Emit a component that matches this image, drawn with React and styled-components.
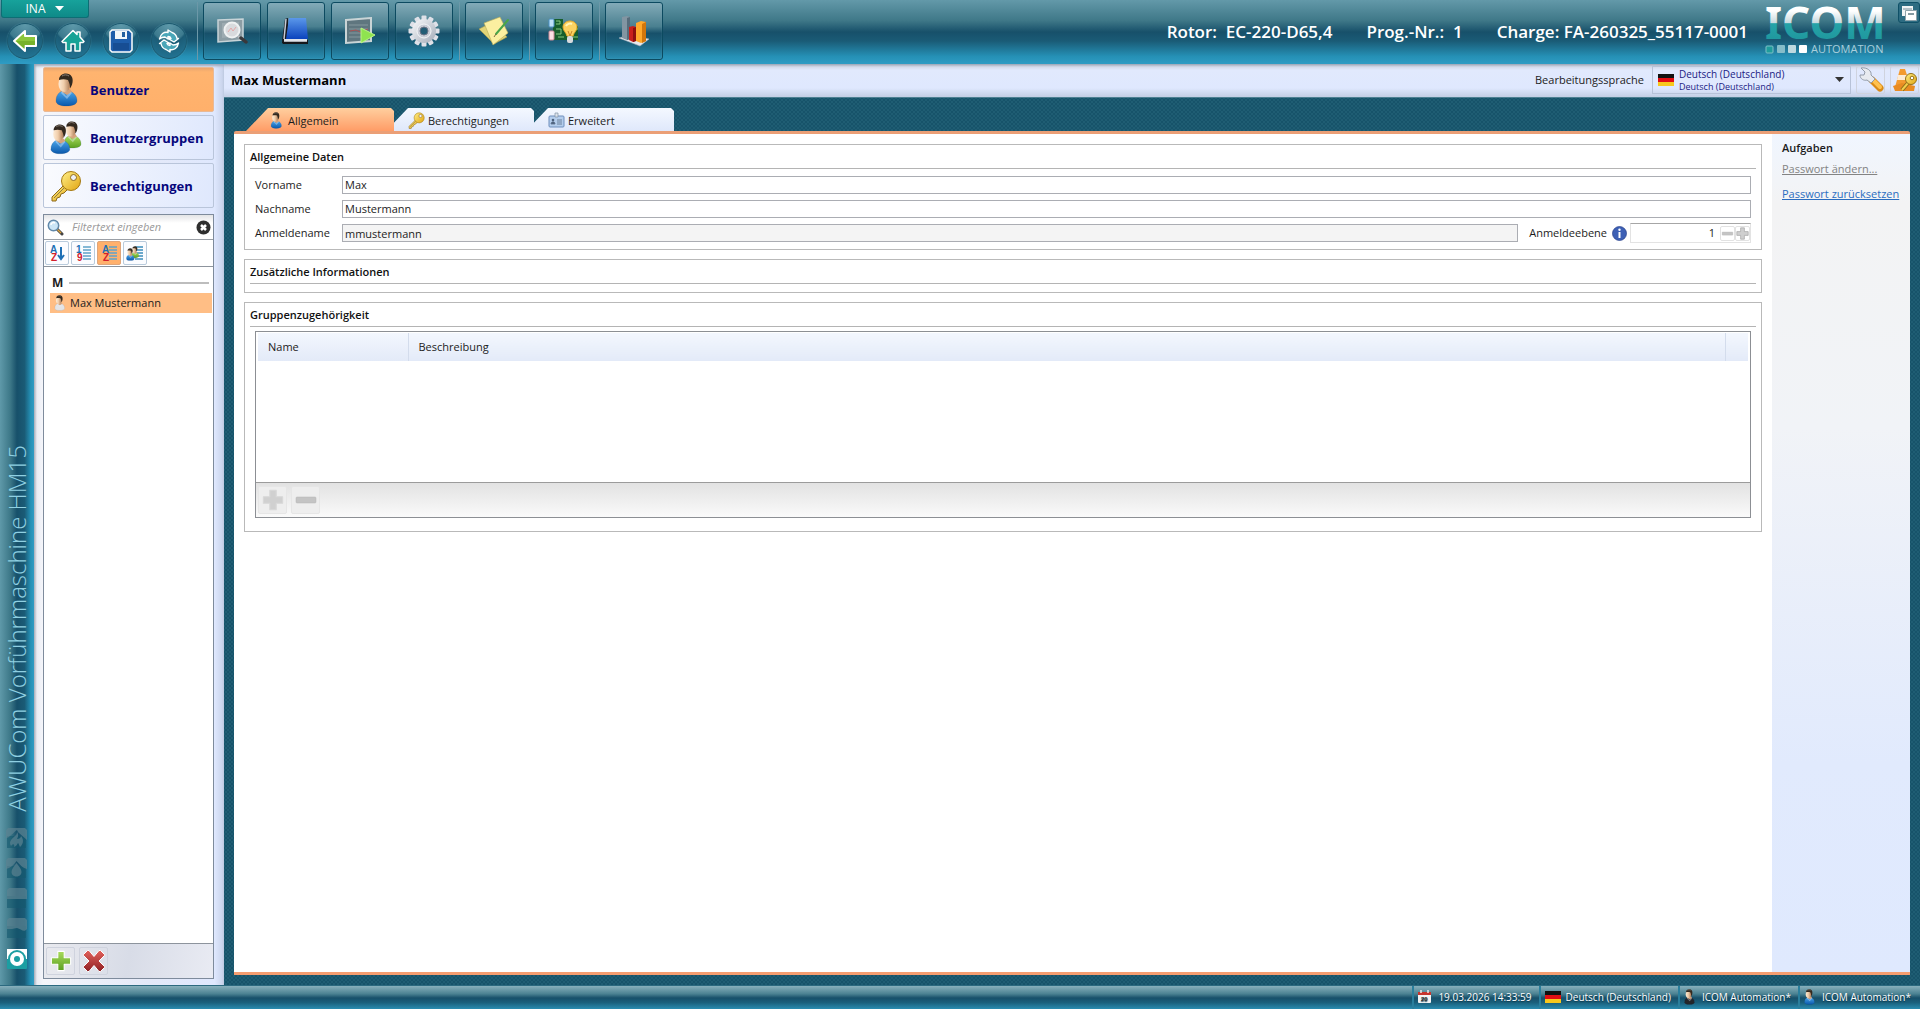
import React, { useState } from 'react';
import styled, { createGlobalStyle } from 'styled-components';

const GlobalStyle = createGlobalStyle`
	* {
		box-sizing: border-box;
	}

	body {
		margin: 0;
		font-family: 'Open Sans', 'Noto Sans', sans-serif;
		font-size: 11px;
		line-height: 16px;
		color: #1c1c1c;
	}

	button, input, select {
		font: inherit;
		color: inherit;
		margin: 0;
		padding: 0;
		border: none;
		border-radius: 0;
		background: none;
		outline: none;
	}

	h1, h2, p {
		margin: 0;
		font-size: inherit;
	}

	svg {
		display: block;
		flex: none;
	}
`;

const Page = styled.div`
	display: flex;
	flex-direction: column;
	min-height: 100vh;
	background-color: #17536a;
`;

/* header */

const Header = styled.header`
	display: flex;
	justify-content: space-between;
	height: 64px;
	background: linear-gradient(#6399a9 0%, #3f7888 32%, #17506a 50%, #1a5b76 64%, #2590b5 88%, #2f9cc4 100%);
`;

const HeaderSide = styled.div`
	display: flex;
`;

const Navigation = styled.div`
	width: 197px;
	padding-left: 1px;
`;

const MenuButton = styled.button`
	display: flex;
	align-items: center;
	justify-content: center;
	gap: 10px;
	width: 88px;
	height: 18px;
	border: 1px solid #0d6e74;
	border-top: none;
	border-radius: 0 0 3px 3px;
	background: linear-gradient(#17a29b, #0e8a88);
	font-size: 12px;
	color: #fff;
`;

const RoundButtons = styled.div`
	display: flex;
	gap: 12px;
	padding: 5px 6px;
`;

const RoundButton = styled.button`
	display: flex;
	align-items: center;
	justify-content: center;
	width: 36px;
	height: 36px;
	border: 1px solid #1c5a70;
	border-radius: 50%;
	background: radial-gradient(circle at 50% 0%, #5f9aab 0%, #3c7a8e 45%, #1c5c76 50%, #23799a 100%);
	box-shadow: 0 0 1px #5fa3b8;
`;

const Toolbar = styled.div`
	display: flex;
	align-items: flex-start;
	gap: 6px;
	padding-top: 2px;
`;

const ToolGroup = styled.div`
	display: flex;
	gap: 6px;
	padding-left: 5px;
	border-left: 1px solid #6c98a8;
`;

const ToolButton = styled.button`
	display: flex;
	align-items: center;
	justify-content: center;
	width: 58px;
	height: 58px;
	border: 1px solid #0c4a60;
	border-radius: 3px;
	background: linear-gradient(#83abb8 0%, #4a8090 42%, #17506a 54%, #1b617c 72%, #2a8fb3 100%);
	box-shadow: inset 0 0 1px #6fa4b4;
`;

const JobInfo = styled.div`
	display: flex;
	gap: 34px;
	padding-top: 20px;
	padding-right: 17px;
	font-size: 17px;
	font-weight: 600;
	line-height: 24px;
	color: #fff;
	white-space: pre;
`;

const Logo = styled.div`
	width: 133px;
	padding-top: 8px;

	svg {
		overflow: visible;
	}
`;

const WindowButton = styled.button`
	display: flex;
	align-items: center;
	justify-content: center;
	width: 22px;
	height: 21px;
	margin-top: 2px;
	border: 1px solid #0f5067;
	border-radius: 3px;
	background-color: #2d6c82;
`;

/* machine strip */

const Body = styled.div`
	display: flex;
	flex: 1;
`;

const Strip = styled.div`
	display: flex;
	flex-direction: column;
	align-items: center;
	justify-content: flex-end;
	gap: 9px;
	width: 34px;
	padding: 0 1px 15px 0;
	background: linear-gradient(90deg, #5f99a9 0%, #3d7888 30%, #17506a 50%, #1a5b76 72%, #2590b5 90%, #2f9cc4 100%);
`;

const MachineName = styled.div`
	margin-bottom: 7px;
	font-size: 24px;
	font-weight: 300;
	line-height: 30px;
	color: #8fd0e2;
	white-space: nowrap;
	writing-mode: vertical-rl;
	transform: rotate(180deg);
`;

/* sidebar */

const Sidebar = styled.aside`
	display: flex;
	flex-direction: column;
	gap: 6px;
	width: 190px;
	padding: 3px 10px 6px 9px;
	background: linear-gradient(90deg, #a9b0ba 0, #e9ecf4 3px, #f5f6fa 9px, #e4e9f8 60%, #dfe8fe 95%, #c6d1e9 100%);
	box-shadow: inset 0 3px 3px -1px #9aa4b5;
`;

const Sections = styled.nav`
	display: flex;
	flex-direction: column;
	gap: 3px;
`;

const SectionButton = styled.button`
	display: flex;
	align-items: center;
	gap: 8px;
	height: 45px;
	padding-left: 6px;
	border: 1px solid ${({ $active }) => ($active ? '#e9b995' : '#b9c5da')};
	border-radius: 2px;
	background: ${({ $active }) => ($active
		? 'linear-gradient(#e9a56f 0, #ffb46f 4px, #ffb06b 100%)'
		: 'linear-gradient(100deg, #fafbfe, #dfe8fd)')};
	color: #06067c;
	font-size: 13px;
	font-weight: 700;
`;

const ListPanel = styled.div`
	display: flex;
	flex: 1;
	flex-direction: column;
	border: 1px solid #7e8b9c;
	background-color: #fff;
`;

const FilterRow = styled.div`
	display: flex;
	align-items: center;
	gap: 8px;
	height: 25px;
	padding: 0 2px 0 3px;
	border-bottom: 1px solid #9a9fa6;
	background: linear-gradient(#e3e4e6, #fff 8px);
`;

const FilterInput = styled.input`
	flex: 1;
	min-width: 0;
	font-style: italic;

	&::placeholder {
		color: #9a9a9a;
		opacity: 1;
	}
`;

const SortRow = styled.div`
	display: flex;
	gap: 2px;
	height: 27px;
	padding: 1px;
	border-bottom: 1px solid #8d949d;
`;

const SortButton = styled.button`
	display: flex;
	align-items: center;
	justify-content: center;
	width: 24px;
	height: 24px;
	border: 1px solid ${({ $active }) => ($active ? '#dfa57a' : '#b9cbdc')};
	border-radius: 2px;
	background-color: ${({ $active }) => ($active ? '#ffb06c' : '#fbfcff')};
`;

const List = styled.div`
	flex: 1;
	padding: 6px 1px 0 6px;
`;

const ListGroup = styled.div`
	display: flex;
	align-items: center;
	gap: 6px;
	height: 20px;
	padding: 0 3px 0 2px;
	font-size: 12px;
	font-weight: 700;

	&::after {
		content: '';
		flex: 1;
		height: 2px;
		background-color: #bdbdbd;
	}
`;

const ListItem = styled.button`
	display: flex;
	align-items: center;
	gap: 3px;
	width: 100%;
	height: 20px;
	padding-left: 2px;
	background-color: #ffbe85;
`;

const ListFooter = styled.div`
	display: flex;
	gap: 4px;
	height: 35px;
	padding: 3px 2px;
	border-top: 1px solid #8d949d;
	background: linear-gradient(100deg, #e9eaef, #d8dce7 50%, #e9ebf3);
`;

const FlatButton = styled.button`
	display: flex;
	align-items: center;
	justify-content: center;
	width: 29px;
	height: 28px;
	border: 1px solid ${({ $soft }) => ($soft ? '#e6e6e6' : '#cfd3de')};
	border-radius: 2px;
	background-color: ${({ $soft }) => ($soft ? '#eeeeee' : 'transparent')};
`;

/* main */

const Main = styled.main`
	display: flex;
	flex: 1;
	flex-direction: column;
	min-width: 0;
`;

const TitleBar = styled.div`
	display: flex;
	align-items: center;
	justify-content: space-between;
	height: 33px;
	padding: 0 1px 2px 7px;
	background: linear-gradient(#9aa4b5 0, #d4dbeb 3px, #e1e9fd 6px, #dfe8fe 24px, #c3cee4 100%);
`;

const Title = styled.h1`
	font-size: 13px;
	font-weight: 700;
	line-height: 18px;
	color: #000;
`;

const TitleTools = styled.div`
	display: flex;
	align-items: center;
	gap: 5px;
`;

const LanguageBox = styled.div`
	display: flex;
	align-items: center;
	gap: 5px;
	width: 199px;
	height: 28px;
	margin-left: 3px;
	padding: 0 6px 0 5px;
	border: 1px solid #b7c2d8;
	color: #1b1b84;
`;

const LanguageText = styled.div`
	flex: 1;
	font-size: 9px;
	line-height: 11px;
`;

const LanguageSelect = styled.select`
	display: block;
	width: 100%;
	height: 14px;
	appearance: none;
	font-size: 10px;
	line-height: 14px;
`;

const Workspace = styled.div`
	display: flex;
	flex: 1;
	flex-direction: column;
	padding: 10px;
	border-top: 1px solid #4d8092;
	background-color: #17536a;
	background-image:
		radial-gradient(circle, #1f5d73 1px, transparent 1px),
		radial-gradient(circle, #1f5d73 1px, transparent 1px);
	background-position: 0 0, 2px 2px;
	background-size: 4px 4px;
`;

const Tabs = styled.div`
	display: flex;
	height: 23px;
	padding-left: 12px;
`;

const Tab = styled.button`
	display: flex;
	align-items: center;
	gap: 3px;
	z-index: ${({ $level }) => $level};
	width: 148px;
	padding-top: 2px;
	padding-left: 22px;
	margin-right: -8px;
	background: ${({ $active }) => ($active
		? 'linear-gradient(#ffcf9f, #ff9c66)'
		: 'linear-gradient(#f4f8ff, #dfe8fb)')};
	clip-path: polygon(0 100%, 22px 0, calc(100% - 3px) 0, 100% 3px, 100% 100%);
`;

const Card = styled.div`
	display: flex;
	flex: 1;
	border-top: 3px solid #eb9f76;
	border-bottom: 3px solid #f59d70;
	border-radius: 2px 2px 0 0;
	background-color: #fff;
`;

const Form = styled.div`
	display: flex;
	flex: 1;
	flex-direction: column;
	gap: 9px;
	min-width: 0;
	padding: 10px;
`;

const GroupBox = styled.section`
	padding: 3px 5px ${({ $bottom }) => $bottom || 8}px;
	border: 1px solid #b9b9b9;
`;

const GroupTitle = styled.h2`
	padding-bottom: 3px;
	border-bottom: 1px solid #b4b4b4;
	font-weight: 600;
	line-height: 17px;
	color: #111;
`;

const Fields = styled.div`
	display: flex;
	flex-direction: column;
	gap: 5px;
	padding: 6px 5px 0;
`;

const Field = styled.div`
	display: flex;
	align-items: center;
	min-height: 19px;
`;

const FieldLabel = styled.label`
	width: 87px;
`;

const TextInput = styled.input`
	flex: 1;
	min-width: 0;
	height: 18px;
	padding: 0 2px;
	border: 1px solid #abadb3;
	background-color: ${({ readOnly }) => (readOnly ? '#f4f4f4' : '#fff')};
	line-height: 16px;
`;

const LevelLabel = styled.label`
	margin: 0 5px 0 11px;
`;

const Spinner = styled.div`
	display: flex;
	align-items: center;
	width: 121px;
	height: 20px;
	margin-left: 3px;
	border: 1px solid #e3e3e3;
	border-top-color: #a6a6a6;
`;

const SpinnerInput = styled.input`
	flex: 1;
	min-width: 0;
	padding-right: 5px;
	text-align: right;
`;

const StepButton = styled.button`
	display: flex;
	align-items: center;
	justify-content: center;
	width: 15px;
	height: 15px;
	border: 1px solid #e2e2e2;
	border-radius: 2px;
`;

const GridBox = styled.div`
	margin: 4px 5px 0;
	border: 1px solid #8c8f94;
`;

const GridBody = styled.div`
	min-height: 150px;
	padding: 1px 2px;
`;

const GroupTable = styled.table`
	width: 100%;
	border-collapse: collapse;
	table-layout: fixed;
`;

const Th = styled.th`
	width: ${({ $width }) => $width || 'auto'};
	height: 28px;
	padding: 0 0 0 10px;
	border-right: 1px solid #d3dcec;
	background: linear-gradient(#f3f7fe, #e3eaf8);
	font-weight: 400;
	text-align: left;

	&:last-child {
		border-right: none;
	}
`;

const GridFooter = styled.div`
	display: flex;
	gap: 4px;
	height: 35px;
	padding: 3px 2px;
	border-top: 1px solid #9b9b9b;
	background: linear-gradient(#e2e2e2, #fafafa);
`;

const Tasks = styled.aside`
	display: flex;
	flex-direction: column;
	align-items: flex-start;
	width: 138px;
	padding: 6px 0 0 10px;
	background: linear-gradient(#f0f6ff 0, #f3f3f4 70px, #f1f3f7 35%, #e1eafd 75%, #dfe9fe 100%);
`;

const TasksTitle = styled.h2`
	margin-bottom: 5px;
	font-weight: 600;
`;

const TaskLink = styled.a`
	margin-bottom: 9px;
	color: ${({ $disabled }) => ($disabled ? '#838383' : '#2a6cc0')};
	text-decoration: underline;
	white-space: nowrap;
`;

/* status bar */

const StatusBar = styled.footer`
	display: flex;
	justify-content: flex-end;
	height: 24px;
	padding-right: 2px;
	border-top: 1px solid #2c6a80;
	background: linear-gradient(#88b0bc 0%, #4b8292 34%, #17506a 52%, #1a607c 72%, #2a8cb0 100%);
`;

const StatusItem = styled.div`
	display: flex;
	align-items: center;
	gap: ${({ $gap }) => $gap || 5}px;
	padding: 0 7px 2px 4px;
	border-left: 2px solid #2a7f9d;
	color: #fff;
	font-size: 10px;
	text-shadow: 0 1px 1px #0d3b4d;
	white-space: nowrap;
`;

/* drawings */

const Gradients = () => (
	<svg width="0" height="0" aria-hidden="true">
		<defs>
			<linearGradient id="skin" x1="0" x2="1" y1="0" y2="0">
				<stop offset="0" stopColor="#fdebd6" />
				<stop offset="0.45" stopColor="#f0cdaa" />
				<stop offset="1" stopColor="#a97650" />
			</linearGradient>
			<linearGradient id="blue" x1="0" x2="0" y1="0" y2="1">
				<stop offset="0" stopColor="#4aa5ea" />
				<stop offset="1" stopColor="#0a58ab" />
			</linearGradient>
			<linearGradient id="green" x1="0" x2="0" y1="0" y2="1">
				<stop offset="0" stopColor="#a9dc5c" />
				<stop offset="1" stopColor="#5a9f20" />
			</linearGradient>
			<linearGradient id="red" x1="0" x2="0" y1="0" y2="1">
				<stop offset="0" stopColor="#e2625c" />
				<stop offset="1" stopColor="#8f2024" />
			</linearGradient>
			<linearGradient id="gold" x1="0" x2="1" y1="0" y2="1">
				<stop offset="0" stopColor="#fff089" />
				<stop offset="1" stopColor="#e1a411" />
			</linearGradient>
			<linearGradient id="steel" x1="0" x2="1" y1="0" y2="1">
				<stop offset="0" stopColor="#fafbfc" />
				<stop offset="1" stopColor="#a3abb8" />
			</linearGradient>
			<linearGradient id="book" x1="0" x2="0" y1="0" y2="1">
				<stop offset="0" stopColor="#5b98ea" />
				<stop offset="1" stopColor="#0b43bd" />
			</linearGradient>
			<linearGradient id="split" gradientUnits="userSpaceOnUse" x1="0" x2="0" y1="0" y2="30">
				<stop offset="0.1" stopColor="#ffffff" />
				<stop offset="0.5" stopColor="#c5d8de" />
				<stop offset="0.52" stopColor="#25a3a8" />
				<stop offset="1" stopColor="#20999f" />
			</linearGradient>
		</defs>
	</svg>
);

const bodyFill = { blue: 'url(#blue)', green: 'url(#green)', grey: '#e4e4e6', black: '#23262b' };

const Person = ({ tone = 'blue' }) => (
	<g>
		<path d="M1 28c0-5 2-8 6-10h8c4 2 7 5 7 10 0 3-4 5-11 5-6 0-10-2-10-5z" fill={bodyFill[tone]} stroke="#1a3f66" strokeOpacity="0.3" strokeWidth="0.600" />
		<path d="M6 16h9l2 3-5 3-5-3z" fill="#d5a27c" />
		<path d="M7 18l4 5 5-4 1 1-5 6-6-6z" fill="#e8f1fa" fillOpacity="0.400" />
		<ellipse cx="9.500" cy="11" rx="6" ry="8" fill="url(#skin)" />
		<path d="M4 7C4 3 7 0.500 11 0.500c5 0 7.500 4 6.500 9-0.500 3-1.500 4.500-2.500 6 0.200-3-0.300-5-2-8.500C10 6 7 6 4 7z" fill="#33291f" />
		<path d="M7 3c2-1.500 5-1.500 7 0" stroke="#8b8078" strokeWidth="1" fill="none" />
	</g>
);

const UserIcon = ({ size = 34, tone }) => (
	<svg width={Math.round(size * 0.7)} height={size} viewBox="0 0 23 34">
		<Person tone={tone} />
	</svg>
);

const UsersIcon = ({ width = 32, height = 34 }) => (
	<svg width={width} height={height} viewBox="0 0 32 34">
		<g transform="translate(13 0) scale(0.82)"><Person tone="green" /></g>
		<g transform="translate(0 3) scale(0.9)"><Person tone="blue" /></g>
	</svg>
);

const KeyIcon = ({ size = 32 }) => (
	<svg width={size} height={size} viewBox="0 0 32 32">
		<path d="M14 15L2 27v4h4l1-3 3-1 1-3 3-1 5-5z" fill="url(#gold)" stroke="#8e6a1c" />
		<path d="M4 28l11-11" stroke="#8e7a45" />
		<circle cx="21" cy="11" r="9.500" fill="url(#gold)" stroke="#a57912" />
		<circle cx="23.500" cy="7.500" r="3" fill="#eef0f6" stroke="#8e6a1c" />
	</svg>
);

const Flag = () => (
	<svg width="16" height="12" viewBox="0 0 16 12">
		<rect width="16" height="4" fill="#111" />
		<rect y="4" width="16" height="4" fill="#e00d13" />
		<rect y="8" width="16" height="4" fill="#f8c81c" />
	</svg>
);

const Caret = ({ color = '#fff' }) => (
	<svg width="9" height="5" viewBox="0 0 9 5"><path d="M0 0h9L4.500 5z" fill={color} /></svg>
);

const ArrowIcon = () => (
	<svg width="26" height="24" viewBox="0 0 26 24">
		<path d="M2 12L13 2v5h11v10H13v5z" fill="#8cc63a" stroke="#fff" strokeWidth="2" strokeLinejoin="round" />
		<path d="M4 12h19v4H13v4z" fill="#69a51f" opacity="0.600" />
	</svg>
);

const HomeIcon = () => (
	<svg width="24" height="24" viewBox="0 0 24 24">
		<path d="M12 1.500l4 4V3h3v5l4 4.500-1 1h-3V22h-5v-7h-4v7H5v-8.500H2l-1-1z" fill="#16a396" stroke="#fff" strokeWidth="1.500" strokeLinejoin="round" />
	</svg>
);

const SaveIcon = () => (
	<svg width="24" height="24" viewBox="0 0 24 24">
		<path d="M3 1h17l3 3v17l-2 2H3l-2-2V3z" fill="#1e5dab" stroke="#fff" strokeWidth="1.500" />
		<rect x="6" y="2" width="12" height="8" fill="#f3f6f9" />
		<rect x="13" y="3" width="3" height="5" fill="#25609f" />
		<path d="M4 14h16v7H4z" fill="#174d93" />
	</svg>
);

const syncArrow = 'M1.500 10C2.500 5 6 2.500 10 3.500V1l4 2.500c3 1 4.500 3 5 6h1.500l-4.500 3.500-6-3.500h3C12.500 8 11.500 7.500 10 7.500V10L7 8C5 8 3 8.500 1.500 10z';

const SyncIcon = () => (
	<svg width="22" height="24" viewBox="0 0 22 24">
		<g fill="#4aa6b8" stroke="#fff" strokeWidth="1.400" strokeLinejoin="round">
			<path d={syncArrow} />
			<path d={syncArrow} transform="rotate(180 11 12)" />
		</g>
	</svg>
);

const SearchScreenIcon = () => (
	<svg width="32" height="28" viewBox="0 0 32 28">
		<path d="M2 3l25-1v21l-25 2z" fill="#8c9da4" stroke="#c8d4d8" strokeWidth="1.500" />
		<path d="M6 6l17-1v14L6 21z" fill="#a4b1b6" opacity="0.700" />
		<circle cx="16" cy="13" r="7.500" fill="#d8dadd" stroke="#eef1f2" strokeWidth="2" />
		<path d="M12 15l3-4 2 3 3-4" fill="none" stroke="#e3a7a7" />
		<path d="M22 19l3 3" stroke="#b9bcc0" strokeWidth="2" />
		<path d="M25 21l5 4" stroke="#39383b" strokeWidth="3.500" strokeLinecap="round" />
	</svg>
);

const BookIcon = () => (
	<svg width="30" height="28" viewBox="0 0 30 28">
		<path d="M4 2l3-1v20l20 2v4H2l-1-3z" fill="#17181d" />
		<path d="M3 22h23v3H3z" fill="#dfe3ea" />
		<path d="M8 1h17l2 21H5z" fill="url(#book)" />
		<path d="M5 2L3 22" stroke="#c4cad5" strokeWidth="1.500" />
		<path d="M1 25.500h26" stroke="#15161b" strokeWidth="1.500" />
	</svg>
);

const PlayScreenIcon = () => (
	<svg width="32" height="28" viewBox="0 0 32 28">
		<path d="M2 3l25-2v23L2 26z" fill="#5f767f" stroke="#c9d4d6" strokeWidth="2" />
		<path d="M5 8h19M5 12h19M5 16h19M5 20h19" stroke="#86989f" />
		<path d="M6 14l6-1 4 2 8-3" stroke="#ab5353" fill="none" />
		<path d="M17 11l14 7-14 8z" fill="#8fe34f" stroke="#b9f486" />
	</svg>
);

const GearIcon = () => (
	<svg width="32" height="32" viewBox="0 0 32 32">
		<g fill="#dfe1e8">
			{[0, 30, 60, 90, 120, 150, 180, 210, 240, 270, 300, 330].map((angle) => (
				<rect key={angle} x="13.500" y="0.500" width="5" height="7" rx="1" transform={`rotate(${angle} 16 16)`} />
			))}
		</g>
		<circle cx="16" cy="16" r="12" fill="url(#steel)" />
		<circle cx="16" cy="16" r="7" fill="#c9cdd6" stroke="#f5f6f8" />
		<circle cx="16" cy="16" r="4" fill="#235d75" stroke="#6c7486" />
	</svg>
);

const NotesIcon = () => (
	<svg width="32" height="32" viewBox="0 0 32 32">
		<path d="M1 14l14-7 14 15-13 7z" fill="#e2d477" stroke="#a89d4d" strokeWidth="0.600" />
		<path d="M6 8l16-6 8 16-15 12z" fill="#fbefa0" stroke="#b5a957" strokeWidth="0.600" />
		<path d="M18 19L30 5" stroke="#4aa548" strokeWidth="2" strokeLinecap="round" />
		<path d="M16 22l2-3" stroke="#7b6a3d" />
	</svg>
);

const CircuitIcon = () => (
	<svg width="32" height="28" viewBox="0 0 32 28">
		<path d="M5 2h10v7h15v14H5z" fill="#175e2c" />
		<path d="M8 4h4v3H8M8 12h5v5H8M10 20h6M27 12h3M25 20h5" fill="none" stroke="#86c77e" />
		<rect x="1" y="2" width="5" height="8" rx="1" fill="#bfe2f7" stroke="#4b8fc3" />
		<rect x="1" y="14" width="5" height="9" rx="1" fill="#fbe1e4" stroke="#cb8a97" />
		<path d="M22 4c4 0 7 3 7 6 0 4-3 5-4 9h-6c-1-4-4-5-4-9 0-3 3-6 7-6z" fill="#fbd261" stroke="#e9a927" />
		<path d="M18 9c1-2 4-3 6-2" stroke="#fff6b8" strokeWidth="2" fill="none" />
		<path d="M20 14l2 5 2-5" stroke="#c8862a" fill="none" />
		<rect x="19" y="19" width="6" height="7" rx="2" fill="#d7dade" />
	</svg>
);

const ChartIcon = () => (
	<svg width="32" height="32" viewBox="0 0 32 32">
		<path d="M1 23l11-3 19 4-9 7z" fill="#e7e9ee" stroke="#a4adba" strokeWidth="0.600" />
		<path d="M4 2l5-1 3 1v22l-3 1-5-2z" fill="#8295a2" />
		<path d="M9 3l3-1v22l-3 1z" fill="#566c7b" />
		<path d="M11 12l4-1 3 1v14l-3 1-4-2z" fill="#c8201c" />
		<path d="M15 13l3-1v14l-3 1z" fill="#8d100f" />
		<path d="M18 8l5-2 5 1v19l-5 2-5-2z" fill="#ffa92c" />
		<path d="M24 9l4-2v19l-4 2z" fill="#d1760c" />
	</svg>
);

const IcomLogo = () => (
	<svg width="122" height="48" viewBox="0 0 122 48">
		<text x="0" y="31" fontSize="44" fontWeight="700" fill="url(#split)" fontFamily="Noto Sans, sans-serif">ICOM</text>
		<rect x="1" y="38" width="7" height="7" rx="1" fill="#1f9c9c" stroke="#7fc0c6" />
		<rect x="12" y="37" width="8" height="8" rx="1" fill="#86bdc9" />
		<rect x="23" y="37" width="8" height="8" rx="1" fill="#bdd9e0" />
		<rect x="34" y="37" width="8" height="8" rx="1" fill="#fff" />
		<text x="46" y="45" fontSize="11" fill="#a9cfdc" fontFamily="Open Sans, sans-serif">AUTOMATION</text>
	</svg>
);

const WindowsIcon = () => (
	<svg width="16" height="16" viewBox="0 0 16 16">
		<path d="M1 1h11v10H1z" fill="#f1f4f5" />
		<path d="M2 4h9" stroke="#9fb0b7" strokeWidth="1.500" />
		<path d="M4.500 5.500h11v10h-11z" fill="#fff" stroke="#8fa3ab" />
		<path d="M7 9h6" stroke="#5d7883" strokeWidth="1.500" />
	</svg>
);

const WrenchIcon = () => (
	<svg width="26" height="26" viewBox="0 0 26 26">
		<path d="M14 13l8 8" stroke="#d98a16" strokeWidth="7" strokeLinecap="round" />
		<path d="M14 12l8 8" stroke="#ffc14e" strokeWidth="4" strokeLinecap="round" />
		<path d="M3 1l4 4-1 3-4 0c0 4 4 6 7 5l4 3 4-4-4-4c1-4-4-8-10-7z" fill="#e8ebf0" stroke="#929ba8" />
	</svg>
);

const ConeKeyIcon = () => (
	<svg width="26" height="26" viewBox="0 0 26 26">
		<path d="M8 2h5l6 18H3z" fill="#f39a2f" />
		<path d="M6 8h9l2 5H5z" fill="#fdebd3" />
		<path d="M1 19l9-3 13 3-1 5H3z" fill="#e98b22" />
		<path d="M16 16l-6 7" stroke="#8d6c18" strokeWidth="4" />
		<path d="M16 16l-6 7" stroke="#f3ce4b" strokeWidth="2" />
		<circle cx="19" cy="12" r="5.500" fill="url(#gold)" stroke="#94711a" />
		<circle cx="20" cy="11" r="1.800" fill="#fff" stroke="#94711a" />
	</svg>
);

const LensIcon = () => (
	<svg width="17" height="17" viewBox="0 0 17 17">
		<path d="M10 10l5 5" stroke="#444" strokeWidth="3" strokeLinecap="round" />
		<path d="M10 10l4 4" stroke="#dda23b" strokeWidth="1.500" />
		<circle cx="6.500" cy="6.500" r="5.200" fill="#cbe5f6" stroke="#6289aa" strokeWidth="1.500" />
		<path d="M4 6c0-2 2-3 4-2" stroke="#fff" strokeWidth="1.500" fill="none" />
	</svg>
);

const ClearIcon = () => (
	<svg width="15" height="15" viewBox="0 0 15 15">
		<circle cx="7.500" cy="7.500" r="7" fill="#2e2e2e" />
		<path d="M5 5l5 5M10 5l-5 5" stroke="#fff" strokeWidth="2.500" />
	</svg>
);

const SortIcon = ({ top, bottom, bars }) => (
	<svg width="18" height="18" viewBox="0 0 18 18" fontFamily="Liberation Sans, sans-serif" fontWeight="700" fontSize="10">
		{bars
			? <path d="M9 3h8M9 6h8M9 9h8M9 12h8M9 15h8" stroke="#5fa3c9" strokeWidth="1.500" />
			: <path d="M13 3v11M10 11l3 4 3-4" stroke="#1d6fb5" strokeWidth="2" fill="none" />}
		<text x="2" y="9" fill="#1d6fb5">{top}</text>
		<text x="3" y="17" fill="#d3202c">{bottom}</text>
	</svg>
);

const GroupSortIcon = () => (
	<svg width="18" height="18" viewBox="0 0 18 18">
		<path d="M9 3h8M9 6h8M9 9h8M9 12h8M9 15h8" stroke="#3c8dbc" strokeWidth="1.500" />
		<g transform="translate(5 2) scale(0.36)"><Person tone="green" /></g>
		<g transform="translate(0 4) scale(0.38)"><Person tone="blue" /></g>
	</svg>
);

const CrossShape = ({ size = 24, fill = 'url(#green)', line = '#fff' }) => (
	<svg width={size} height={size} viewBox="0 0 24 24">
		<path d="M8.500 1.500h7v7h7v7h-7v7h-7v-7h-7v-7h7z" fill={fill} stroke={line} strokeWidth="1.200" strokeLinejoin="round" />
	</svg>
);

const MinusShape = ({ size = 24 }) => (
	<svg width={size} height={size} viewBox="0 0 24 24">
		<rect x="2" y="9" width="20" height="6" rx="1" fill="#c4c4c4" stroke="#b5b5b5" strokeWidth="0.500" />
	</svg>
);

const DeleteIcon = () => (
	<svg width="24" height="24" viewBox="0 0 24 24">
		<path d="M1.500 5.500l4-4h1.500l5 6 5-6h1.500l4 4v1L17 12l5.500 5.500v1l-4 4H17l-5-6-5 6H5.500l-4-4v-1L7 12 1.500 6.500z" fill="url(#red)" stroke="#fff" strokeLinejoin="round" />
	</svg>
);

const CardIcon = () => (
	<svg width="17" height="17" viewBox="0 0 17 17">
		<rect x="1" y="4" width="15" height="11" rx="1" fill="#b4cdec" stroke="#6f8fbd" />
		<path d="M7 1h3v4H7z" fill="#dce3ec" stroke="#8292a8" strokeWidth="0.700" />
		<circle cx="5" cy="8" r="1.300" fill="#4d617d" />
		<path d="M3 12c0-3 4-3 4 0zM9 8h5M9 10h5M9 12h5" stroke="#5a6e8a" strokeWidth="0.800" fill="#4d617d" />
	</svg>
);

const InfoIcon = () => (
	<svg width="15" height="15" viewBox="0 0 15 15">
		<circle cx="7.500" cy="7.500" r="7" fill="#3d60b5" stroke="#263f8a" strokeWidth="0.700" />
		<circle cx="7.500" cy="3.700" r="1.200" fill="#fff" />
		<path d="M7.500 6v6" stroke="#fff" strokeWidth="2" />
	</svg>
);

const CalendarIcon = () => (
	<svg width="13" height="13" viewBox="0 0 13 13">
		<rect x="0" y="2" width="13" height="11" rx="1" fill="#f3f3f3" />
		<rect x="0" y="2" width="13" height="3" fill="#c7342d" />
		<path d="M3 0v3M10 0v3" stroke="#e9e9e9" strokeWidth="1.500" />
		<text x="3" y="11" fontSize="6" fontWeight="700" fill="#222" fontFamily="Liberation Sans, sans-serif">20</text>
	</svg>
);

const stateMarks = [
	'M0 10V2l2-2h17l2 2v10l-8-7c-1-1-1-1-2-3-2 1-4 4-6 5-2 2-3 3-5 3z M5 18c-3-5 2-8 4-10 1-1 2-2 2-4 2 3 1 5 0 7 2 0 4-1 4-3 4 5 1 9-1 11-1-2-1-3-2-4-1 2-2 3-4 4 1-3-1-4-3-1z',
	'M0 11V2l2-2h17l2 2v9c-4-1-7-4-10.500-8C8 7 4 10 0 11z M10.500 5c3 4 5 6 5 9 0 6-10 6-10 0 0-3 2-5 5-9z',
	'M1 2l2-2h16l2 2v9H1z',
	'M1 2l2-2h16l2 2v9c-3 4-6 0-10-1-4 1-6 1-10 1z'
];

const StateMark = ({ path }) => (
	<svg width="21" height="21" viewBox="0 0 21 21">
		<rect x="1" y="8" width="19" height="12" fill="#14586e" opacity="0.600" />
		<path d={path} fill="#5c8392" opacity="0.700" />
	</svg>
);

const ActiveMark = () => (
	<svg width="22" height="22" viewBox="0 0 22 22">
		<rect x="1" y="1" width="20" height="20" rx="1" fill="#1c9ea2" />
		<path d="M1 1h20v10H1z" fill="#fff" />
		<circle cx="11" cy="11" r="9" fill="#1c9ea2" />
		<circle cx="11" cy="11" r="7" fill="#fff" />
		<circle cx="11" cy="11" r="3" fill="#1c9ea2" />
	</svg>
);

/* parts */

const toolGroups = [
	[
		{ label: 'Suche', Icon: SearchScreenIcon },
		{ label: 'Handbuch', Icon: BookIcon },
		{ label: 'Start', Icon: PlayScreenIcon },
		{ label: 'Einstellungen', Icon: GearIcon }
	],
	[{ label: 'Notizen', Icon: NotesIcon }],
	[{ label: 'Diagnose', Icon: CircuitIcon }],
	[{ label: 'Statistik', Icon: ChartIcon }]
];

const roundButtons = [
	{ label: 'Zurück', Icon: ArrowIcon },
	{ label: 'Startseite', Icon: HomeIcon },
	{ label: 'Speichern', Icon: SaveIcon },
	{ label: 'Aktualisieren', Icon: SyncIcon }
];

const sections = [
	{ label: 'Benutzer', icon: <svg width="32" height="34" viewBox="-5 0 32 34"><Person /></svg> },
	{ label: 'Benutzergruppen', icon: <UsersIcon /> },
	{ label: 'Berechtigungen', icon: <KeyIcon /> }
];

const tabs = [
	{ label: 'Allgemein', icon: <svg width="17" height="17" viewBox="-5 0 34 34"><Person /></svg> },
	{ label: 'Berechtigungen', icon: <KeyIcon size={17} /> },
	{ label: 'Erweitert', icon: <CardIcon /> }
];

const TopBar = () => (
	<Header>
		<HeaderSide>
			<Navigation>
				<MenuButton>INA <Caret /></MenuButton>
				<RoundButtons>
					{roundButtons.map(({ label, Icon }) => (
						<RoundButton key={label} aria-label={label}><Icon /></RoundButton>
					))}
				</RoundButtons>
			</Navigation>
			<Toolbar>
				{toolGroups.map((group) => (
					<ToolGroup key={group[0].label}>
						{group.map(({ label, Icon }) => (
							<ToolButton key={label} aria-label={label}><Icon /></ToolButton>
						))}
					</ToolGroup>
				))}
			</Toolbar>
		</HeaderSide>
		<HeaderSide>
			<JobInfo>
				<span>{'Rotor:  EC-220-D65,4'}</span>
				<span>{'Prog.-Nr.:  1'}</span>
				<span>Charge: FA-260325_55117-0001</span>
			</JobInfo>
			<Logo><IcomLogo /></Logo>
			<WindowButton aria-label="Fenster"><WindowsIcon /></WindowButton>
		</HeaderSide>
	</Header>
);

const UserSidebar = () => {
	const [section, setSection] = useState('Benutzer');

	return (
		<Sidebar>
			<Sections>
				{sections.map(({ label, icon }) => (
					<SectionButton key={label} $active={section === label} onClick={() => setSection(label)}>
						{icon}
						{label}
					</SectionButton>
				))}
			</Sections>
			<ListPanel>
				<FilterRow>
					<LensIcon />
					<FilterInput aria-label="Filtertext" placeholder="Filtertext eingeben" />
					<button aria-label="Filter löschen"><ClearIcon /></button>
				</FilterRow>
				<SortRow>
					<SortButton aria-label="Nach Name"><SortIcon top="A" bottom="Z" /></SortButton>
					<SortButton aria-label="Nach Nummer"><SortIcon top="1" bottom="9" bars /></SortButton>
					<SortButton aria-label="Nach Alphabet" $active><SortIcon top="A" bottom="Z" bars /></SortButton>
					<SortButton aria-label="Nach Gruppe"><GroupSortIcon /></SortButton>
				</SortRow>
				<List>
					<ListGroup>M</ListGroup>
					<ListItem>
						<svg width="15" height="16" viewBox="-5 0 32 34"><Person tone="grey" /></svg>
						Max Mustermann
					</ListItem>
				</List>
				<ListFooter>
					<FlatButton aria-label="Hinzufügen"><CrossShape size={22} /></FlatButton>
					<FlatButton aria-label="Löschen"><DeleteIcon /></FlatButton>
				</ListFooter>
			</ListPanel>
		</Sidebar>
	);
};

const UserForm = () => (
	<Form>
		<GroupBox $bottom={6}>
			<GroupTitle>Allgemeine Daten</GroupTitle>
			<Fields>
				<Field>
					<FieldLabel htmlFor="vorname">Vorname</FieldLabel>
					<TextInput id="vorname" defaultValue="Max" />
				</Field>
				<Field>
					<FieldLabel htmlFor="nachname">Nachname</FieldLabel>
					<TextInput id="nachname" defaultValue="Mustermann" />
				</Field>
				<Field>
					<FieldLabel htmlFor="anmeldename">Anmeldename</FieldLabel>
					<TextInput id="anmeldename" defaultValue="mmustermann" readOnly />
					<LevelLabel htmlFor="ebene">Anmeldeebene</LevelLabel>
					<InfoIcon />
					<Spinner>
						<SpinnerInput id="ebene" defaultValue="1" />
						<StepButton aria-label="Weniger" disabled><MinusShape size={13} /></StepButton>
						<StepButton aria-label="Mehr" disabled><CrossShape size={13} fill="#cfcfcf" line="#a2a2a2" /></StepButton>
					</Spinner>
				</Field>
			</Fields>
		</GroupBox>
		<GroupBox>
			<GroupTitle>Zusätzliche Informationen</GroupTitle>
		</GroupBox>
		<GroupBox $bottom={13}>
			<GroupTitle>Gruppenzugehörigkeit</GroupTitle>
			<GridBox>
				<GridBody>
					<GroupTable>
						<thead>
							<tr>
								<Th $width="150px">Name</Th>
								<Th>Beschreibung</Th>
								<Th $width="23px" aria-label="Aktion" />
							</tr>
						</thead>
						<tbody />
					</GroupTable>
				</GridBody>
				<GridFooter>
					<FlatButton $soft aria-label="Gruppe hinzufügen" disabled>
						<CrossShape size={22} fill="#d0d0d0" line="#d8d8d8" />
					</FlatButton>
					<FlatButton $soft aria-label="Gruppe entfernen" disabled><MinusShape /></FlatButton>
				</GridFooter>
			</GridBox>
		</GroupBox>
	</Form>
);

const App = () => {
	const [tab, setTab] = useState('Allgemein');

	return (
		<Page>
			<GlobalStyle />
			<TopBar />
			<Body>
				<Strip>
					<MachineName>AWUCom Vorführmaschine HM15</MachineName>
					{stateMarks.map((path) => <StateMark key={path} path={path} />)}
					<ActiveMark />
				</Strip>
				<UserSidebar />
				<Main>
					<TitleBar>
						<Title>Max Mustermann</Title>
						<TitleTools>
							<label htmlFor="sprache">Bearbeitungssprache</label>
							<LanguageBox>
								<Flag />
								<LanguageText>
									<LanguageSelect id="sprache">
										<option>Deutsch (Deutschland)</option>
									</LanguageSelect>
									Deutsch (Deutschland)
								</LanguageText>
								<Caret color="#333" />
							</LanguageBox>
							<FlatButton aria-label="Werkzeuge"><WrenchIcon /></FlatButton>
							<FlatButton aria-label="Rechte"><ConeKeyIcon /></FlatButton>
						</TitleTools>
					</TitleBar>
					<Workspace>
						<Tabs>
							{tabs.map(({ label, icon }, index) => (
								<Tab
									key={label}
									$active={tab === label}
									$level={tabs.length - index}
									onClick={() => setTab(label)}
								>
									{icon}
									{label}
								</Tab>
							))}
						</Tabs>
						<Card>
							<UserForm />
							<Tasks>
								<TasksTitle>Aufgaben</TasksTitle>
								<TaskLink href="#aendern" $disabled>Passwort ändern...</TaskLink>
								<TaskLink href="#zuruecksetzen">Passwort zurücksetzen</TaskLink>
							</Tasks>
						</Card>
					</Workspace>
				</Main>
			</Body>
			<StatusBar>
				<StatusItem $gap={7}><CalendarIcon />19.03.2026 14:33:59</StatusItem>
				<StatusItem><Flag />Deutsch (Deutschland)</StatusItem>
				<StatusItem $gap={7}><UserIcon size={16} tone="black" />ICOM Automation*</StatusItem>
				<StatusItem $gap={7}><UserIcon size={16} />ICOM Automation*</StatusItem>
			</StatusBar>
			<Gradients />
		</Page>
	);
};

export default App;
